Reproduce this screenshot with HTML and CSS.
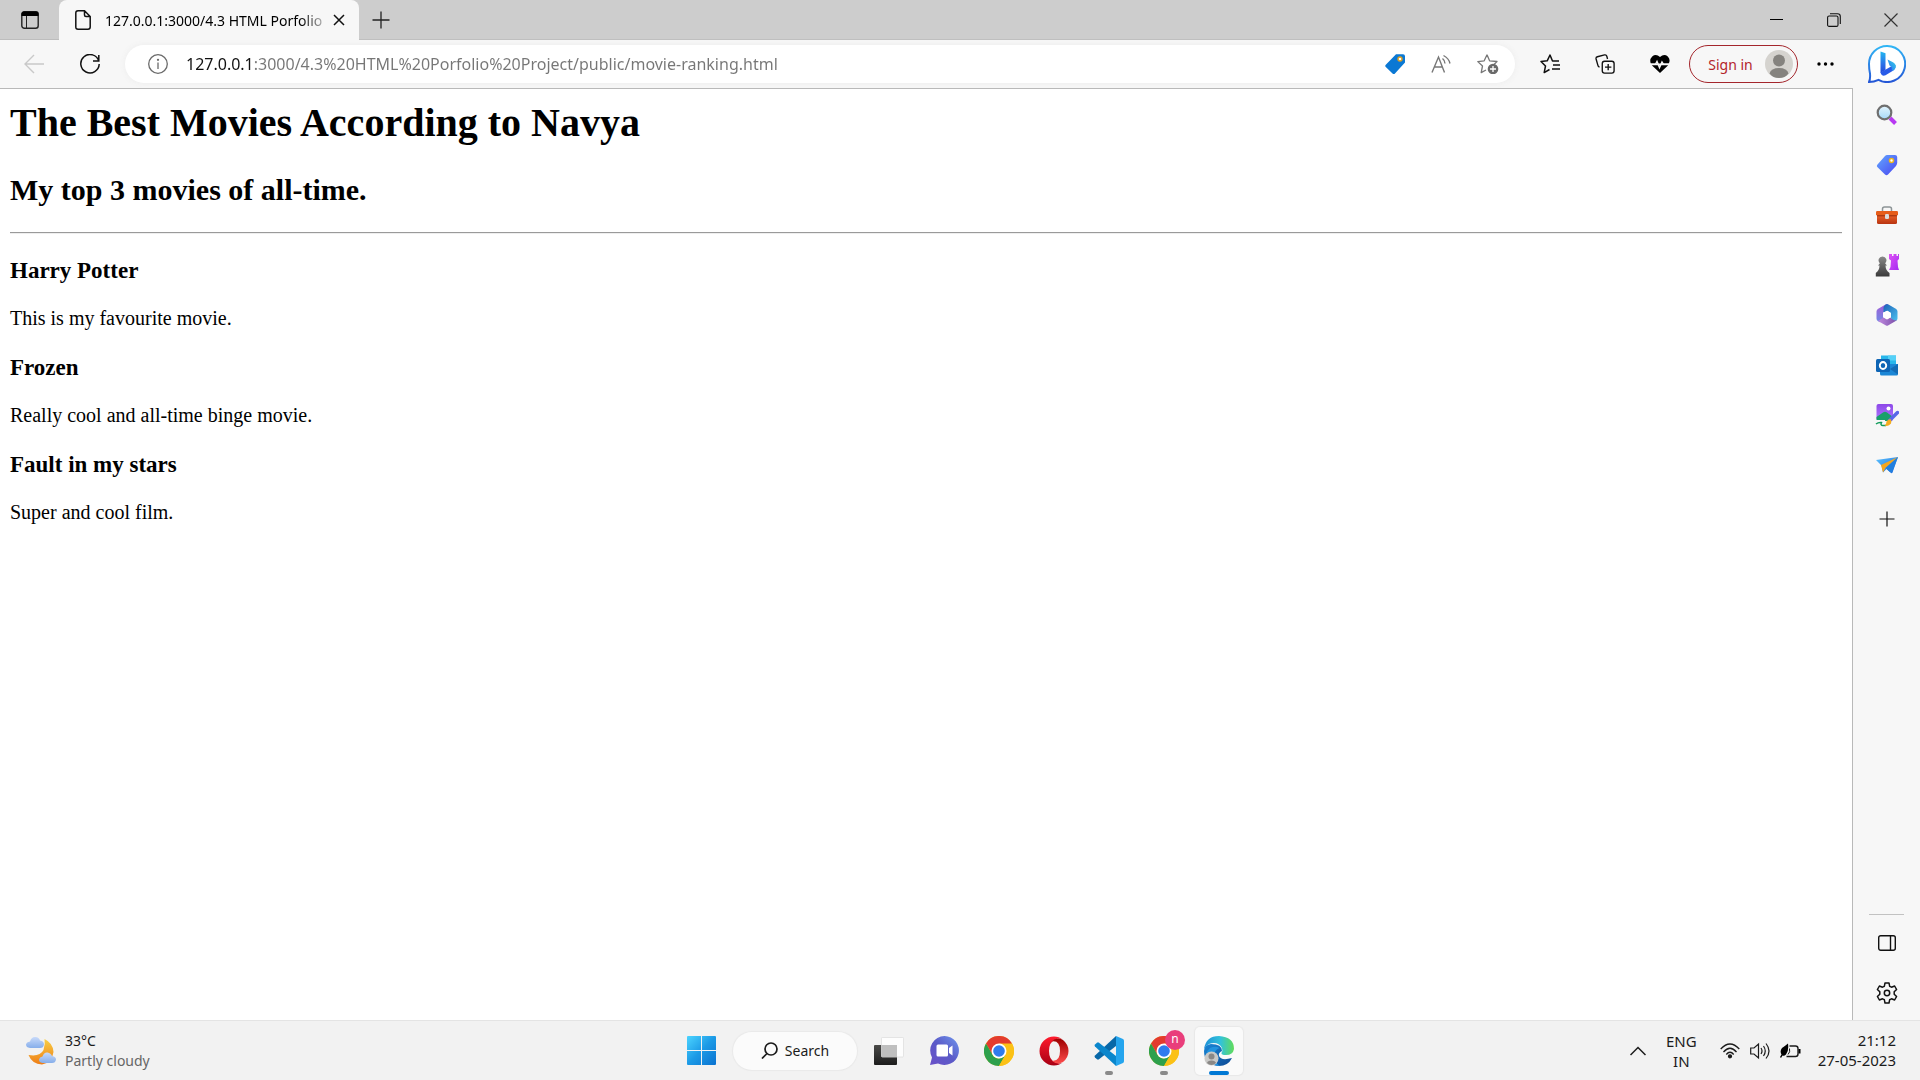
FILE: index.html
```html
<!DOCTYPE html>
<html lang="en">
<head>
<meta charset="utf-8">
<title>127.0.0.1:3000/4.3 HTML Porfolio Project</title>
<link rel="stylesheet" href="styles.css">
</head>
<body>
<svg class="defs" aria-hidden="true">
  <defs>
    <linearGradient id="gBing" x1="0" y1="0" x2="0" y2="1"><stop offset="0" stop-color="#31b6f5"/><stop offset="1" stop-color="#2456d6"/></linearGradient>
    <linearGradient id="gBingB" x1="0" y1="0" x2="0" y2="1"><stop offset="0" stop-color="#23b8f0"/><stop offset=".6" stop-color="#2a6fe8"/><stop offset="1" stop-color="#2348d8"/></linearGradient>
    <linearGradient id="gBingC" x1="1" y1="0" x2="0" y2="1"><stop offset="0" stop-color="#36d4e8"/><stop offset="1" stop-color="#2a6cf0"/></linearGradient>
    <linearGradient id="gPink" x1="0" y1="0" x2="1" y2="1"><stop offset="0" stop-color="#e052f5"/><stop offset="1" stop-color="#a32cf0"/></linearGradient>
    <linearGradient id="gGlass" x1="0" y1="0" x2="0" y2="1"><stop offset="0" stop-color="#e4f5fe"/><stop offset="1" stop-color="#a5d8f7"/></linearGradient>
    <linearGradient id="gTag" x1="0" y1="0" x2="1" y2="1"><stop offset="0" stop-color="#62a8ff"/><stop offset="1" stop-color="#4a45f0"/></linearGradient>
    <linearGradient id="gBox" x1="0" y1="0" x2="0" y2="1"><stop offset="0" stop-color="#f0682c"/><stop offset="1" stop-color="#b83410"/></linearGradient>
    <linearGradient id="gPawn" x1="0" y1="0" x2="0" y2="1"><stop offset="0" stop-color="#8a8a8a"/><stop offset="1" stop-color="#3a3a3a"/></linearGradient>
    <linearGradient id="gImg" x1="0" y1="0" x2="0" y2="1"><stop offset="0" stop-color="#8d48e8"/><stop offset="1" stop-color="#b07aff"/></linearGradient>
    <linearGradient id="gPlane" x1="0" y1="0" x2="1" y2="1"><stop offset="0" stop-color="#5cc4ff"/><stop offset="1" stop-color="#1a62d8"/></linearGradient>
    <linearGradient id="gM365a" x1="0" y1="0" x2="0" y2="1"><stop offset="0" stop-color="#a45bd6"/><stop offset="1" stop-color="#6f8be6"/></linearGradient>
    <linearGradient id="gM365b" x1="0" y1="0" x2="1" y2="1"><stop offset="0" stop-color="#1c62b8"/><stop offset="1" stop-color="#4cc0ee"/></linearGradient>
    <linearGradient id="gM365c" x1="0" y1="0" x2="1" y2="0"><stop offset="0" stop-color="#c08ae0"/><stop offset="1" stop-color="#7a4fa8"/></linearGradient>
    <linearGradient id="gWin" gradientUnits="userSpaceOnUse" x1="0" y1="0" x2="29" y2="29"><stop offset="0" stop-color="#4cd4ff"/><stop offset=".5" stop-color="#1c9ae6"/><stop offset="1" stop-color="#0a72d0"/></linearGradient>
    <linearGradient id="gChat" x1="1" y1="0" x2="0" y2="1"><stop offset="0" stop-color="#6f97ee"/><stop offset=".5" stop-color="#5b5bc8"/><stop offset="1" stop-color="#6a50c8"/></linearGradient>
    <linearGradient id="gMoon" x1="0" y1="0" x2="0" y2="1"><stop offset="0" stop-color="#f8cf45"/><stop offset="1" stop-color="#ee7d16"/></linearGradient>
    <linearGradient id="gCloud" x1="0" y1="0" x2="0" y2="1"><stop offset="0" stop-color="#c8dafa"/><stop offset="1" stop-color="#86aeea"/></linearGradient>
    <linearGradient id="gOpera" x1="0" y1="0" x2="0" y2="1"><stop offset="0" stop-color="#ff1b2d"/><stop offset="1" stop-color="#a70014"/></linearGradient>
    <linearGradient id="gOpera2" x1="0" y1="0" x2="0" y2="1"><stop offset="0" stop-color="#9c0000"/><stop offset="1" stop-color="#ff4b4b"/></linearGradient>
    <linearGradient id="gEdgeTop" x1="0" y1="0" x2="1" y2="0"><stop offset="0" stop-color="#1d8fd8"/><stop offset=".55" stop-color="#32c2da"/><stop offset="1" stop-color="#62dc58"/></linearGradient>
    <linearGradient id="gEdgeLow" x1="0" y1="0" x2="1" y2="1"><stop offset="0" stop-color="#1a86d6"/><stop offset="1" stop-color="#0d4a94"/></linearGradient>
    <linearGradient id="gDark" x1="0" y1="0" x2="0" y2="1"><stop offset="0" stop-color="#4a4a48"/><stop offset="1" stop-color="#1c1c1c"/></linearGradient>
    <symbol id="chrome" viewBox="0 0 30 30">
      <circle cx="15" cy="15" r="15" fill="#fbc116"/>
      <path d="M15 15L2 7.500A15 15 0 0 1 28 7.500Z" fill="#e33b2e"/>
      <path d="M2 7.500L8.500 18.700L15 15L15 7.500Z" fill="#e33b2e"/>
      <path d="M2 7.500L8.500 18.700A7.500 7.500 0 0 0 15 22.500L21.500 18.700L15 30A15 15 0 0 1 2 7.500Z" fill="#2da04c"/>
      <path d="M15 7.500H28A15 15 0 0 1 15 30L21.500 18.700Z" fill="#fbc116"/>
      <circle cx="15" cy="15" r="7.500" fill="#fff"/><circle cx="15" cy="15" r="5.800" fill="#2f7bee"/>
    </symbol>
  </defs>
</svg>

<header class="titlebar">
  <button class="tab-menu" aria-label="Tab actions"><svg width="18" height="18" viewBox="0 0 18 18"><rect x=".8" y=".8" width="16.400" height="16.400" rx="2.500" fill="none" stroke="#222" stroke-width="1.400"/><path d="M.5 5V3Q.5.5 3 .5H15Q17.500.5 17.500 3V5Z"/><path d="M5.500 5V17" stroke="#222"/></svg></button>
  <div class="tab">
    <svg width="16" height="20" viewBox="0 0 16 20" fill="none" stroke="#111" stroke-width="1.500"><path d="M3 .8H9.500L15.200 6.500V17Q15.200 19.200 13 19.200H3Q.8 19.200.8 17V3Q.8.8 3 .8ZM9.500.8V5Q9.500 6.500 11 6.500H15.200"/></svg>
    <span class="tab-title">127.0.0.1:3000/4.3 HTML Porfolio</span>
    <button class="tab-close" aria-label="Close tab"><svg width="12" height="12" viewBox="0 0 12 12" stroke="#111" stroke-width="1.500"><path d="M1 1L11 11M11 1L1 11"/></svg></button>
  </div>
  <button class="new-tab" aria-label="New tab"><svg width="18" height="18" viewBox="0 0 18 18" stroke="#222" stroke-width="1.300"><path d="M9 .5V17.500M.5 9H17.500"/></svg></button>
  <div class="window-controls">
    <button aria-label="Minimize"><svg width="14" height="14" viewBox="0 0 14 14"><rect y="6" width="13" height="1"/></svg></button>
    <button aria-label="Restore"><svg width="14" height="14" viewBox="0 0 14 14" fill="none" stroke="#111" stroke-width="1.100"><rect x=".6" y="3" width="10.400" height="10.400" rx="1.500"/><path d="M3 .8H10.500Q13.300.8 13.300 3.500V11"/></svg></button>
    <button aria-label="Close"><svg width="14" height="14" viewBox="0 0 14 14" stroke="#333" stroke-width="1.200"><path d="M.5.5L13.500 13.500M13.500.5L.5 13.500"/></svg></button>
  </div>
</header>

<div class="browser">
  <nav class="toolbar">
    <button class="tool" aria-label="Back" disabled><svg width="20" height="20" viewBox="0 0 20 20" fill="none" stroke="#c9c9c9" stroke-width="1.400"><path d="M20 10H1M10 1L1 10L10 19"/></svg></button>
    <button class="tool" aria-label="Refresh"><svg width="20" height="20" viewBox="0 0 20 20" fill="none" stroke="#111" stroke-width="1.500"><path d="M18.800 7A9.200 9.200 0 1 0 19.200 10M18.800 1V7H13"/></svg></button>
    <form class="address">
      <button type="button" aria-label="Site information"><svg width="20" height="20" viewBox="0 0 20 20" fill="none" stroke="#6a6a6a" stroke-width="1.300"><circle cx="10" cy="10" r="9.300"/><path d="M10 8.500V15"/><circle cx="10" cy="5.800" r=".5" fill="#6a6a6a"/></svg></button>
      <input class="url" type="text" aria-label="Address" spellcheck="false" value="127.0.0.1:3000/4.3%20HTML%20Porfolio%20Project/public/movie-ranking.html">
      <button type="button" aria-label="Shopping"><svg width="20" height="20" viewBox="0 0 20 20"><path d="M11 .3H18Q20 .3 20 2.300V8.500L9.500 20Q8.500 20.500 7.500 19.500L.8 13Q-.3 12 .8 10.800Z" fill="#0a78d4"/><circle cx="15" cy="5" r="2" fill="#fff" stroke="#e0a020" stroke-width="1.400"/></svg></button>
      <button type="button" aria-label="Read aloud"><svg width="20" height="20" viewBox="0 0 20 20" fill="none" stroke="#777" stroke-width="1.400"><path d="M1 18.500L7.500 3L13.500 18.500M3.500 13H11.500M11.500 4.500Q14 6.500 14 9.500M12.500 1.500Q18 4.500 19 9.500"/></svg></button>
      <button type="button" aria-label="Add to favorites"><svg width="22" height="20" viewBox="0 0 22 20"><path d="M10 .8L12.600 6.800L20 7.500L17 10.500M10 .8L7.200 6.800L.8 7.600L5.500 12L4.200 18.600L9 16" fill="none" stroke="#777" stroke-width="1.300" stroke-linejoin="round"/><circle cx="16" cy="15" r="5.300" fill="#6a6a6a"/><path d="M16 12V18M13 15H19" stroke="#fff" stroke-width="1.300"/></svg></button>
    </form>
    <div class="actions">
      <button class="tool" aria-label="Favorites"><svg width="20" height="20" viewBox="0 0 20 20" fill="none" stroke="#111" stroke-width="1.500" stroke-linejoin="round"><path d="M19 7H12.500L10 1L7.200 6.800L1 7.500L5.500 12L4.200 18.600L9.500 15.500M13 11H20M12 15H20"/></svg></button>
      <button class="tool" aria-label="Collections"><svg width="20" height="20" viewBox="0 0 22 22" fill="none" stroke="#111" stroke-width="1.500"><rect x="8" y="8" width="13" height="13" rx="2.500"/><path d="M14.500 11V18M11 14.500H18M5 14.500Q3.500 14 3.200 12.500L1.200 5.500Q.8 3.500 2.600 3L10.500 1Q12.500.6 13 2.500L13.800 5.500"/></svg></button>
      <button class="tool" aria-label="Browser essentials"><svg width="20" height="18" viewBox="0 0 20 18"><path d="M10 2Q6-1.500 2.200 1.500Q-.8 4.500.8 8.500H18.800Q20.800 4.500 17.800 1.500Q14-1.500 10 2ZM1.800 10.200L10 18L18.200 10.200Z"/><path d="M0 9.300H5.500L7 6.500L9.500 12.500L12 7L13.500 9.300H20" fill="none" stroke="#f7f7f7" stroke-width="1.500"/></svg></button>
      <button class="sign-in">Sign in<svg width="28" height="28" viewBox="0 0 28 28"><circle cx="14" cy="14" r="14" fill="#d5d3cf"/><circle cx="14" cy="10.500" r="6" fill="#85837f"/><path d="M4.500 23.500Q6 18 14 18Q22 18 23.500 23.500Q20 28 14 28Q8 28 4.500 23.500Z" fill="#85837f"/></svg></button>
      <button class="tool" aria-label="Settings and more"><svg width="17" height="4" viewBox="0 0 17 4"><circle cx="2" cy="2" r="1.700"/><circle cx="8.500" cy="2" r="1.700"/><circle cx="15" cy="2" r="1.700"/></svg></button>
    </div>
  </nav>

  <main class="page">
    <h1>The Best Movies According to Navya</h1>
    <h2>My top 3 movies of all-time.</h2>
    <hr>
    <h3>Harry Potter</h3>
    <p>This is my favourite movie.</p>
    <h3>Frozen</h3>
    <p>Really cool and all-time binge movie.</p>
    <h3>Fault in my stars</h3>
    <p>Super and cool film.</p>
  </main>

  <aside class="sidebar">
    <button class="bing" aria-label="Bing"><svg width="38" height="38" viewBox="0 0 38 38"><path d="M19 1A18 18 0 1 1 10.500 34.800Q6 37 1 37Q2.500 34 2 28.500Q1 24 1 19A18 18 0 0 1 19 1Z" fill="#fff" stroke="url(#gBing)" stroke-width="2"/><path d="M12.500 6.500L17.500 8.200V25L12.500 28Z" fill="url(#gBingB)"/><path d="M12.500 27.500L23 21.500L27.500 20Q27.500 24 24.500 26L17.500 30.300Q14 32 12.500 27.500Z" fill="#295be8"/><path d="M19.500 14.500L25 17.200Q28 18.800 27.800 22.500Q27 25 24 26L23.500 22L21.500 20.500Z" fill="url(#gBingC)"/></svg></button>
    <button aria-label="Search"><svg width="22" height="22" viewBox="0 0 22 22"><path d="M14 14L19.500 19.500" stroke="#b838f2" stroke-width="4"/><circle cx="8.500" cy="8.500" r="6.800" fill="url(#gGlass)" stroke="#6f6f6f" stroke-width="2.200"/></svg></button>
    <button aria-label="Shopping"><svg width="22" height="22" viewBox="0 0 22 22"><path d="M11 1H19Q21 1 21.200 3V9Q21 10.500 20 12L12 20.500Q10.500 22 9 20.500L1.300 13Q.3 12 1.300 10.800L9 2Q10 1 11 1Z" fill="url(#gTag)"/><circle cx="15.500" cy="6.500" r="2" fill="#fff" stroke="#edb51c" stroke-width="1.500"/></svg></button>
    <button aria-label="Tools"><svg width="24" height="20" viewBox="0 0 24 20"><path d="M7.500 7V4Q7.500 2 9.500 2H14.500Q16.500 2 16.500 4V7" fill="none" stroke="#8d9496" stroke-width="1.500"/><rect x="2" y="9" width="20" height="10" rx="1.500" fill="url(#gBox)"/><rect x="1" y="6" width="22" height="4.500" rx="1.200" fill="#e65d1a"/><path d="M2 10.800H22" stroke="#842108" stroke-width=".8"/><rect x="10" y="9" width="4" height="5" rx="1.200" fill="#d9dcdd"/></svg></button>
    <button aria-label="Games"><svg width="24" height="24" viewBox="0 0 24 24"><path d="M14.500 1H17V3H18.500V1H21.500V3H23V1H24V6L22.500 7.500L23 14L24 17H14L15.500 14L16 7.500L14 6V1Z" fill="url(#gPink)"/><path d="M7.500 3.500A4 4 0 0 1 10.200 10.500L12 12.500H10.500Q10.500 17 14.500 20V23.500H.8V20Q4.500 17 4.500 12.500H3L4.800 10.500A4 4 0 0 1 7.500 3.500Z" fill="url(#gPawn)"/></svg></button>
    <button aria-label="Microsoft 365"><svg width="22" height="22" viewBox="0 0 22 22"><path d="M10 .3L1.800 5Q.5 6 .5 7.500V14.500Q.5 16 1.800 17L4 18.200L8 15.500L7 13V8.500L12 5.500V.3Q11-.3 10 .3Z" fill="url(#gM365a)"/><path d="M7.500 8.200V3.500Q8 1.500 10 .3L12 .3L20.200 5Q21.500 6 21.500 7.500V14.500Q21.500 15.500 20.500 16.500Q15 18 15 13.500V9L11.500 6.800Z" fill="url(#gM365b)"/><path d="M2 17L7.500 13.500L11 15.500L14.500 13.500Q16 16.500 21 16.300L12 21.500Q11 22 10 21.500Z" fill="url(#gM365c)"/><path d="M11 6.800L14.800 9V13L11 15.300L7.200 13V9Z" fill="#fff"/></svg></button>
    <button aria-label="Outlook"><svg width="22" height="22" viewBox="0 0 22 22"><path d="M5 1.500H20V12H5Z" fill="#28b7eb"/><path d="M12 1.500H20V6.500H12Z" fill="#55d0f7"/><path d="M4 10L22 10V20Q22 21.500 20.500 21.500H5.500Q4 21.500 4 20Z" fill="#1c87d6"/><path d="M14 15L22 10V20.500Z" fill="#136bb5"/><rect y="5" width="14" height="13" rx="1.500" fill="#0e65b5"/><ellipse cx="7" cy="11.500" rx="3.200" ry="3.500" fill="none" stroke="#fff" stroke-width="1.900"/></svg></button>
    <button aria-label="Image Creator"><svg width="24" height="24" viewBox="0 0 24 24"><rect x="1.500" y="1" width="16.500" height="17" rx="2" fill="url(#gImg)"/><path d="M1.500 14L8 9.500Q10 8 12 9.500L18 14L15 18H3Q1.500 18 1.500 16Z" fill="#18a069"/><circle cx="13.500" cy="5.500" r="2" fill="#fff"/><path d="M0 17H10V19L12 24H0Z" fill="#f7f7f7"/><path d="M1 21Q3.500 19 6.500 19.500Q5 22.500 8 22.500H11" fill="none" stroke="#119c5b" stroke-width="1.500"/><path d="M14.500 17.500L22.500 9.500" stroke="#5768e8" stroke-width="3.500" stroke-linecap="round"/><path d="M15.500 16Q17 17.500 16 20.500Q13.500 24 9.500 22.500Q11.500 21.500 11.500 18.500Q13 16 15.500 16Z" fill="#f5ad20"/></svg></button>
    <button aria-label="Drop"><svg width="22" height="18" viewBox="0 0 22 18"><path d="M0 4L22 1L16.500 16.500Q16 17.500 15 17L10.500 13L7 16.500L5.500 9.500Z" fill="url(#gPlane)"/><path d="M5 9L22 1L9.500 12L7 16.500Z" fill="#f4a61f"/><path d="M9.500 12L22 1L16 16.500L14 16Z" fill="#217fdf"/></svg></button>
    <button class="add" aria-label="Customize"><svg width="16" height="16" viewBox="0 0 16 16" stroke="#111" stroke-width="1.200"><path d="M8 .5V15.500M.5 8H15.500"/></svg></button>
    <div class="sidebar-end">
      <button aria-label="Hide sidebar"><svg width="18" height="16" viewBox="0 0 18 16" fill="none" stroke="#111" stroke-width="1.400"><rect x=".7" y=".7" width="16.600" height="14.600" rx="2"/><path d="M12.500.5V15.500"/></svg></button>
      <button aria-label="Settings"><svg width="22" height="22" viewBox="0 0 22 22" fill="none" stroke="#111" stroke-width="1.500" stroke-linejoin="round"><path d="M9 1H13L13.700 4.300L15.500 5.200L18.600 4L20.600 7.500L18.200 9.800V12.200L20.600 14.500L18.600 18L15.500 16.800L13.700 17.700L13 21H9L8.300 17.700L6.500 16.800L3.400 18L1.400 14.500L3.800 12.200V9.800L1.400 7.500L3.400 4L6.500 5.200L8.300 4.300Z"/><circle cx="11" cy="11" r="2.700"/></svg></button>
    </div>
  </aside>
</div>

<footer class="taskbar">
  <button class="weather">
    <svg width="30" height="30" viewBox="0 0 30 30"><path d="M18.500 3Q27 7 27.500 16Q26 27 16 28.500Q6 28 2.500 19Q14 21 17.500 14Q19.500 8 18.500 3Z" fill="url(#gMoon)"/><path d="M4 12Q0 11.500 0 8.500Q.5 6 4 5.500Q5.500.5 9.500 1Q13 1 14 4.500Q18 5 18 8.500Q17.500 12 14 12Z" fill="url(#gCloud)"/><path d="M16.500 27Q13 26.500 13 23.500Q13.500 21 16.500 20.500Q18 16 21.500 16.500Q25 17 26 20Q30 20.500 30 23.500Q29.500 27 26 27Z" fill="url(#gCloud)"/></svg>
    <span class="lines"><span>33°C</span><span class="muted">Partly cloudy</span></span>
  </button>
  <div class="apps">
    <button class="app" aria-label="Start"><svg width="29" height="29" viewBox="0 0 29 29"><path d="M1 0H14V14H0V1Q0 0 1 0ZM15 0H28Q29 0 29 1V14H15ZM0 15H14V29H1Q0 29 0 28ZM15 15H29V28Q29 29 28 29H15Z" fill="url(#gWin)"/></svg></button>
    <button class="search"><svg width="17" height="17" viewBox="0 0 17 17" fill="none" stroke="#1b1b1b" stroke-width="1.700"><circle cx="10" cy="7" r="6"/><path d="M6 11.500L1 16.500"/></svg>Search</button>
    <button class="app" aria-label="Task view"><svg width="30" height="28" viewBox="0 0 30 28"><rect y="8" width="23" height="20" rx="1" fill="url(#gDark)"/><rect x="7.500" y=".5" width="22" height="19.500" rx="1" fill="#fff" fill-opacity=".8" stroke="#dedede" stroke-width=".8"/><rect x="7.500" y="8" width="15.500" height="12" fill="#bfbfbf"/></svg></button>
    <button class="app" aria-label="Chat"><svg width="29" height="29" viewBox="0 0 29 29"><path d="M14.500 0A14.500 14.500 0 1 1 8 27.500L0 29L2 21.500A14.500 14.500 0 0 1 14.500 0Z" fill="url(#gChat)"/><rect x="6.500" y="8.500" width="11.500" height="12" rx="1.500" fill="#fff"/><path d="M19 12L22.500 9.500V19.500L19 17Z" fill="#fff"/></svg></button>
    <button class="app" aria-label="Chrome"><svg width="30" height="30"><use href="#chrome"/></svg></button>
    <button class="app" aria-label="Opera"><svg width="30" height="30" viewBox="0 0 30 30"><path d="M15 .5A14.500 14.500 0 1 0 15 29.500Q20 29.500 23.500 26.500Q20 28.500 16 26Q10 24 10 15Q10 6 16 4Q20 1.500 23.500 3.500Q20 .5 15 .5Z" fill="url(#gOpera)"/><path d="M12.500 5.500Q18 .5 24 4Q29.500 8.500 29.500 15Q29.500 21.500 24 26Q18 29.500 12.500 24.500Q21 26 21 15Q21 4 12.500 5.500Z" fill="url(#gOpera2)"/></svg></button>
    <button class="app open" aria-label="Visual Studio Code"><svg width="30" height="30" viewBox="0 0 30 30"><path d="M22 0L1 19.500Q0 20.500 1 21.500L3 23.300Q4 24 5 23.300L22 10Z" fill="#0868a8"/><path d="M22 30L1 10.500Q0 9.500 1 8.500L3 6.700Q4 6 5 6.700L22 20Z" fill="#0a86cc"/><path d="M22 0L29 3Q30 3.500 30 5V25Q30 26.500 29 27L22 30Z" fill="#25a5ee"/></svg></button>
    <button class="app open" aria-label="Chrome, profile n"><svg width="30" height="30"><use href="#chrome"/></svg><span class="badge">n</span></button>
    <button class="app open active" aria-label="Microsoft Edge"><svg width="30" height="30" viewBox="0 0 30 30"><path d="M0 15Q0 9 7 8Q18 8 18 15Q14 17 15 20Q17 25 28 22Q24 30 15 30Q0 29 0 15Z" fill="url(#gEdgeLow)"/><path d="M0 13Q2 0 15 0Q30 1 30 13Q29 19 22 19Q17 19 17.500 17Q19 15 18 12Q14 5 5 8Q2 9.500 0 13Z" fill="url(#gEdgeTop)"/><path d="M10 21Q10 14 15.500 12Q11.500 9.500 6 12Q0 17 4 23Q8 30 16 30Q11 27 10 21Z" fill="#2193df"/><circle cx="7.500" cy="22.500" r="7" fill="#c9c9c7"/><circle cx="7.500" cy="20.500" r="3" fill="#8a8886"/><path d="M3 27Q3.500 24.500 7.500 24.500Q11.500 24.500 12 27Q10 29 7.500 29Q5 29 3 27Z" fill="#8a8886"/></svg></button>
  </div>
  <div class="tray">
    <button aria-label="Show hidden icons"><svg width="16" height="10" viewBox="0 0 16 10" fill="none" stroke="#1b1b1b" stroke-width="1.500"><path d="M.5 9L8 1.500L15.500 9"/></svg></button>
    <button class="lines language"><span>ENG</span><span>IN</span></button>
    <button class="status" aria-label="Network, sound and battery">
      <svg width="20" height="16" viewBox="0 0 20 16" fill="none" stroke="#1b1b1b" stroke-width="1.300"><path d="M.7 6Q10-4 19.300 6M3.500 9Q10 1.500 16.500 9M6.300 11.500Q10 7 13.700 11.500"/><circle cx="10" cy="13.300" r="1.500" fill="#1b1b1b"/></svg>
      <svg width="20" height="18" viewBox="0 0 20 18" fill="none" stroke="#1b1b1b" stroke-width="1.200"><path d="M.7 6H4L8.500 2V16L4 12H.7ZM11 6Q13 9 11 12M13.500 4Q17 9 13.500 14M16 1.500Q22 9 16 16.500"/></svg>
      <svg width="21" height="16" viewBox="0 0 21 16"><path d="M9.500 3H15.500Q18 3 18 5.500V11Q18 13.500 15.500 13.500H6.500" fill="none" stroke="#1b1b1b" stroke-width="1.400"/><path d="M18.500 6H20.500V10.500H18.500Z"/><path d="M8 .5Q9 8 6 11.500Q4 13.500 2.500 12.500L1 15L0 14L1.500 11.500Q-.5 8 2 5Q5 3 8 .5Z"/><path d="M9.500 5.500Q10.500 9 8 11.500" fill="none" stroke="#1b1b1b"/></svg>
    </button>
    <button class="lines clock"><span>21:12</span><span>27-05-2023</span></button>
  </div>
</footer>
</body>
</html>
```
FILE: styles.css
```css
* { box-sizing: border-box; }

body {
  margin: 0;
  min-height: 100vh;
  display: flex;
  flex-direction: column;
  background: #fff;
  color: #1b1b1b;
  font-family: "Noto Sans", "Open Sans", sans-serif;
  font-size: 14px;
}

button {
  display: flex;
  align-items: center;
  justify-content: center;
  padding: 0;
  border: 0;
  background: none;
  color: inherit;
  font: inherit;
}

svg { display: block; flex: none; }
.defs { position: absolute; width: 0; height: 0; }

/* Title bar */
.titlebar {
  display: flex;
  height: 40px;
  background: #cdcdcd;
  border-bottom: 1px solid #bdbdbd;
}
.tab-menu { width: 59px; }
.tab {
  display: flex;
  align-items: center;
  width: 300px;
  height: 40px;
  padding: 0 12px 0 16px;
  background: #f7f7f7;
  border-radius: 8px 8px 0 0;
}
.tab-title {
  width: 218px;
  margin-left: 14px;
  white-space: nowrap;
  color: #000;
  mask-image: linear-gradient(90deg, #000 196px, #0004 218px);
}
.tab-close { flex: 1; height: 24px; padding-left: 8px; }
.new-tab { width: 44px; }
.window-controls { display: flex; margin-left: auto; padding-right: 1px; }
.window-controls button { width: 57px; }

/* Browser frame */
.browser {
  flex: 1;
  display: grid;
  grid-template-columns: 1fr 67px;
  grid-template-rows: 48px 1fr;
  background: #f7f7f7;
}
.toolbar {
  display: flex;
  align-items: center;
  padding-left: 6px;
}
.tool { width: 56px; height: 40px; }
.address {
  flex: 1;
  display: flex;
  align-items: center;
  height: 38px;
  margin-left: 7px;
  padding: 0 16px 0 23px;
  background: #fff;
  border-radius: 19px;
  box-shadow: 0 0 6px #ececec;
}
.address button { margin-right: 26px; }
.address button:first-child { margin-right: 18px; }
.address button:last-child { margin-right: 0; }
.url {
  flex: 1;
  min-width: 0;
  padding: 0;
  border: 0;
  outline: 0;
  font-family: inherit;
  font-size: 16px;
  line-height: 24px;
  color: transparent;
  background: linear-gradient(90deg, #111 68px, #767676 68px);
  background-clip: text;
}
.actions { display: flex; align-items: center; padding-left: 7px; }
.actions .tool { width: 55px; }
.sign-in {
  width: 109px;
  height: 38px;
  margin-left: 2px;
  gap: 12px;
  padding-left: 14px;
  border: 1px solid #a4262c;
  border-radius: 19px;
  color: #b3242b;
}

/* Document */
.page {
  padding: 11px 10px 10px;
  border: 1px solid #b9b9b9;
  border-width: 1px 1px 0 0;
  background: #fff;
  color: #000;
  font-family: "Liberation Serif", serif;
  font-size: 20px;
  line-height: 23px;
}
.page h1 { margin: 0 0 27px; font-size: 40px; line-height: 46px; }
.page h2 { margin: 0 0 25px; font-size: 30px; line-height: 34px; }
.page hr { margin: 0 0 23px; border: 0; border-top: 1px solid #9a9a9a; border-bottom: 1px solid #eee; }
.page h3 { margin: 0 0 22px; font-size: 23px; line-height: 28px; }
.page p { margin: 0 0 24px; }

/* Sidebar */
.sidebar {
  grid-column: 2;
  grid-row: 1 / 3;
  display: flex;
  flex-direction: column;
  align-items: center;
}
.sidebar button { width: 50px; height: 50px; }
.sidebar .bing { height: 48px; margin-bottom: 2px; }
.sidebar .add { height: 58px; }
.sidebar-end {
  margin-top: auto;
  padding: 3px 0 2px;
  border-top: 1px solid #c2c2c2;
  width: 35px;
  display: flex;
  flex-direction: column;
  align-items: center;
}

/* Taskbar */
.taskbar {
  display: grid;
  grid-template-columns: 1fr auto 1fr;
  height: 60px;
  background: #f2f2f2;
  border-top: 1px solid #e4e4e4;
}
.weather { justify-self: start; gap: 9px; padding-left: 26px; text-align: left; }
.lines { display: flex; flex-direction: column; justify-content: center; line-height: 20px; }
.muted { color: #666; }
.apps { display: flex; align-items: center; gap: 7px; }
.app {
  position: relative;
  width: 48px;
  height: 48px;
  border-radius: 5px;
}
.search {
  width: 124px;
  height: 38px;
  margin: 0 1px;
  gap: 7px;
  border-radius: 19px;
  background: #fbfbfb;
  box-shadow: 0 0 1px 1px #e9e9e9;
}
.active { background: #fafafa; box-shadow: 0 0 1px 1px #e8e8e8; }
.open::after {
  content: "";
  position: absolute;
  bottom: 0;
  width: 8px;
  height: 4px;
  border-radius: 2px;
  background: #8a8a8a;
}
.active::after { width: 20px; background: #0078d4; }
.badge {
  position: absolute;
  top: 3px;
  right: 3px;
  width: 20px;
  height: 20px;
  border-radius: 10px;
  background: #e93e7b;
  color: #fff;
  font-size: 12px;
  line-height: 18px;
}
.tray { display: flex; justify-content: flex-end; padding-right: 24px; font-size: 15px; }
.language { margin: 0 23px 0 20px; align-items: center; }
.status { gap: 10px; margin-right: 17px; }
.clock { align-items: flex-end; padding-bottom: 2px; }
```
